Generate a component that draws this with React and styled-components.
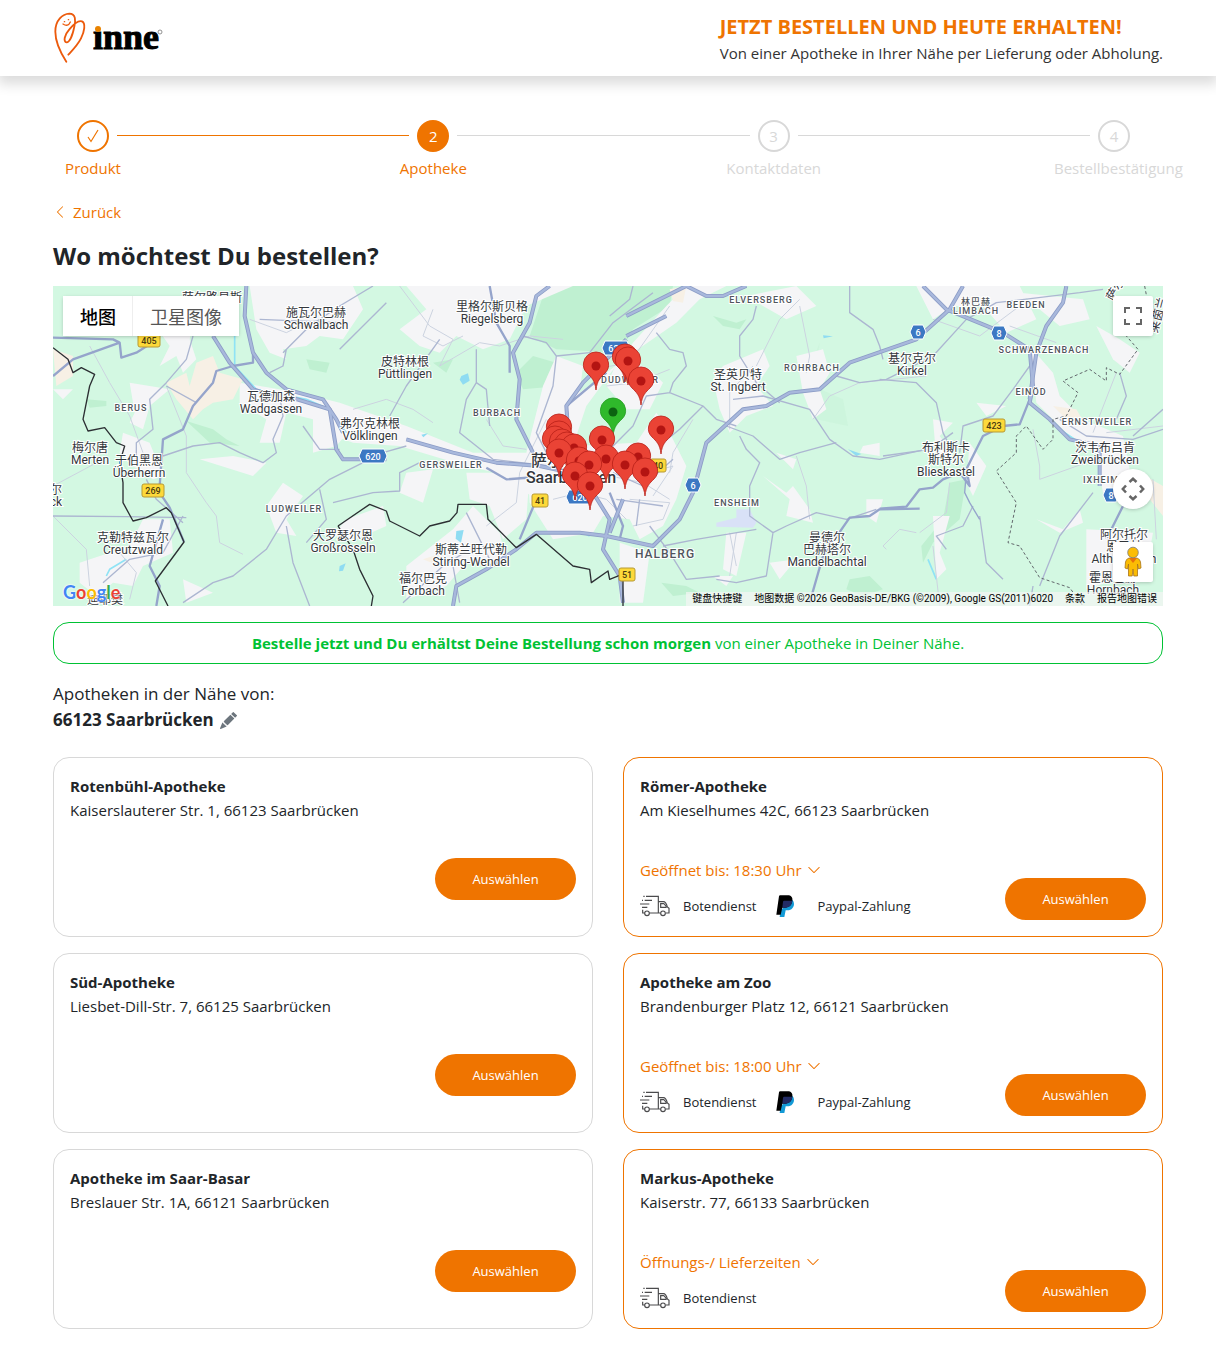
import React, { useState } from "react";
import styled, { createGlobalStyle } from "styled-components";
import { BsChevronDown, BsChevronLeft, BsPencilFill } from "react-icons/bs";

const steps = [
  { label: "Produkt", state: "done" },
  { label: "Apotheke", state: "active" },
  { label: "Kontaktdaten", state: "todo" },
  { label: "Bestellbestätigung", state: "todo" },
];

const pharmacies = [
  { name: "Rotenbühl-Apotheke", address: "Kaiserslauterer Str. 1, 66123 Saarbrücken" },
  {
    name: "Römer-Apotheke",
    address: "Am Kieselhumes 42C, 66123 Saarbrücken",
    hours: "Geöffnet bis: 18:30 Uhr",
    paypal: true,
  },
  { name: "Süd-Apotheke", address: "Liesbet-Dill-Str. 7, 66125 Saarbrücken" },
  {
    name: "Apotheke am Zoo",
    address: "Brandenburger Platz 12, 66121 Saarbrücken",
    hours: "Geöffnet bis: 18:00 Uhr",
    paypal: true,
  },
  { name: "Apotheke im Saar-Basar", address: "Breslauer Str. 1A, 66121 Saarbrücken" },
  {
    name: "Markus-Apotheke",
    address: "Kaiserstr. 77, 66133 Saarbrücken",
    hours: "Öffnungs-/ Lieferzeiten",
  },
];

// x, y of the first line, then the lines
const towns = [
  [159, 12, "萨尔路易斯"],
  [263, 27, "施瓦尔巴赫", "Schwalbach"],
  [439, 21, "里格尔斯贝格", "Riegelsberg"],
  [352, 76, "皮特林根", "Püttlingen"],
  [218, 111, "瓦德加森", "Wadgassen"],
  [317, 138, "弗尔克林根", "Völklingen"],
  [37, 162, "梅尔唐", "Merten"],
  [86, 175, "于伯黑恩", "Überherrn"],
  [3, 204, "尔", "ck"],
  [80, 252, "克勒特兹瓦尔", "Creutzwald"],
  [290, 250, "大罗瑟尔恩", "Großrosseln"],
  [418, 264, "斯蒂兰旺代勒", "Stiring-Wendel"],
  [370, 293, "福尔巴克", "Forbach"],
  [52, 314, "迪耶樊"],
  [685, 89, "圣英贝特", "St. Ingbert"],
  [859, 73, "基尔克尔", "Kirkel"],
  [893, 162, "布利斯卡", "斯特尔", "Blieskastel"],
  [1052, 162, "茨韦布吕肯", "Zweibrücken"],
  [774, 252, "曼德尔", "巴赫塔尔", "Mandelbachtal"],
  [1071, 249, "阿尔托尔", "恩巴赫", "Althornbach"],
  [1060, 292, "霍恩巴赫", "Hornbach"],
];

const districts = [
  [78, 122, "BERUS"],
  [241, 223, "LUDWEILER"],
  [444, 127, "BURBACH"],
  [398, 179, "GERSWEILER"],
  [708, 14, "ELVERSBERG"],
  [759, 82, "ROHRBACH"],
  [577, 94, "DUDWEILER"],
  [684, 217, "ENSHEIM"],
  [923, 16, "林巴赫"],
  [923, 25, "LIMBACH"],
  [973, 19, "BEEDEN"],
  [991, 64, "SCHWARZENBACH"],
  [978, 106, "EINÖD"],
  [1044, 136, "ERNSTWEILER"],
  [1048, 194, "IXHEIM"],
];

const shields = [
  [96, 54, "405"],
  [100, 204, "269"],
  [487, 214, "41"],
  [605, 179, "40"],
  [941, 139, "423"],
  [574, 288, "51"],
  [320, 170, "620", true],
  [527, 211, "620", true],
  [563, 62, "623", true],
  [640, 199, "6", true],
  [865, 46, "6", true],
  [946, 47, "8", true],
  [1058, 209, "8", true],
];

const pins = [
  [572, 72], [543, 80], [575, 75], [588, 95], [506, 142], [506, 149], [502, 154],
  [509, 157], [514, 160], [521, 162], [560, 126, true], [608, 144], [549, 154],
  [506, 167], [526, 175], [553, 173], [585, 171], [536, 179], [572, 179],
  [592, 186], [522, 190], [537, 200],
];

const Logo = () => (
  <LogoLink href="#" aria-label="inne">
    <svg width="34" height="52" viewBox="156 36 102 156" fill="none" stroke="#ec5a0c" strokeWidth="5.500" strokeLinecap="round">
      <path d="M196 185C180 160 163 125 163 95C163 60 185 42 205 41C225 41 224 62 220 80C215 105 206 127 197 127C186 125 190 105 205 88C218 72 232 60 243 64C255 70 250 95 240 115C230 135 215 150 202 164" />
      <path d="M186 72Q201 82 208 66" strokeWidth="4" />
      <path d="M190 65l1 0M202 59l1 0" strokeWidth="4" />
    </svg>
    <svg width="74" height="40" viewBox="0 0 74 40">
      <text x="0" y="31" fontFamily="'Liberation Serif', serif" fontWeight="700" fontSize="36" stroke="#000" strokeWidth="1">inne</text>
      <rect x="0" y="2" width="10" height="11" fill="#fff" />
      <circle cx="5" cy="11" r="3" fill="#e98300" />
      <circle cx="67" cy="14" r="2" fill="none" stroke="#777" strokeWidth="0.8" />
    </svg>
  </LogoLink>
);

const TruckIcon = () => (
  <svg width="30" height="22" viewBox="0 0 90 66" fill="none" stroke="#4b4b4d" strokeWidth="3.5">
    <path d="M18 4H55V54H28M14 54H8V44M55 20H70C78 20 80 28 82 36L87 40V54H78M61 54H56" />
    <path d="M72 26H62V37H80M80 36L72 26M0 27H28M14 16H36M6 37H22M10 4H14M6 16H9" />
    <circle cx="21" cy="55" r="7" />
    <circle cx="69" cy="55" r="7" />
  </svg>
);

const PaypalIcon = () => (
  <svg width="19" height="22" viewBox="0 0 57 66">
    <path fill="#139ad6" d="M48 14C59 22 55 46 34 46H29L25 66H11L14 46z" />
    <path fill="#000" d="M12 1H35C45 1 51 7 49 17C47 32 37 38 25 38H19L14 59H1L9 4Q10 1 12 1z" />
    <path fill="#232c65" d="M24 17H49C48 31 39 38 25 38H19L21 20Q22 17 24 17z" />
  </svg>
);

const MapDrawing = () => (
  <MapSvg viewBox="0 0 1110 320" preserveAspectRatio="xMidYMid slice">
    <rect x="-800" width="2700" height="320" fill="#d3f8e2" />
    {/* terrain and roads are plotted at three times the map scale */}
    <g transform="scale(0.333333)" strokeLinejoin="round" fill="none">
      <g fill="#bff0d1">
        <path d="M1480 0L1860 0 1850 60 1740 130 1700 200 1510 190 1430 150z" />
        <path d="M1440 210L1510 230 1520 300 1410 310 1390 260z" />
        <path d="M760 220L830 230 820 260 770 250zM400 405L480 430 520 460 560 480 470 470zM100 340l60 5 0 15-50 5zM1140 230l60-10-20 40z" />
        <path d="M2300 170L2290 250 2280 300 2370 340 2385 420 2290 400 2250 300z" opacity="0.3" />
        <path d="M2690 590L2740 580 2720 700 2640 770 2610 830 2605 780 2670 700z" />
        <path d="M1825 890L1900 900 1940 920 1860 930zM2390 880l60-10 40 40-60 20-50-20zM1980 90l70 20 30-10-20 30-50-10z" />
      </g>
      <g fill="#f5f5f7">
        <path d="M590 0L900 0 930 70 870 160 800 150 760 180 690 190 700 220 650 200 610 130z" />
        <path d="M1060 0L1560 0 1420 60 1370 160 1290 190 1210 150 1160 200 1100 180 1040 130 1120 70z" />
        <path d="M280 80L420 110 410 160 430 220 390 260 370 210 320 240 350 180z" />
        <path d="M560 290L740 320 860 350 900 420 850 480 780 500 780 400 700 380 680 470 620 470 640 400 560 350z" />
        <path d="M230 290L350 310 290 360 270 430 230 410 245 380zM210 440L290 470 330 570 300 580 240 540 200 500z" />
        <path d="M440 520L540 510 640 530 600 570zM690 590L750 630 700 700 730 750 670 740 640 660z" />
        <path d="M80 830L230 780 270 700 350 700 360 800 270 840 240 900 180 890 130 930 80 890zM390 880L480 920 400 950z" />
        <path d="M0 310L60 310 30 340zM860 350L1060 420 1260 500 1420 500 1500 600 1450 640 1330 560 1240 540 1040 480 900 470 820 440 790 390z" />
        <path d="M1060 560L1140 550 1110 650 1040 620zM1240 560L1430 560 1420 700 1350 760 1310 660 1250 640z" />
        <path d="M1420 500L1470 300 1510 210 1590 240 1580 320 1740 200 1870 110 1940 40 2020 0 1900 0 1840 60 1740 170 1600 360 1560 480 1750 470 1810 380 1850 440 1900 540 1870 640 1830 720 1760 760 1730 700 1650 690 1620 740 1500 760 1430 650z" />
        <path d="M1700 210L1790 250 1830 290 1790 370 1720 370 1660 300zM880 700L990 660 1000 720 910 760 840 750z" />
        <path d="M1060 840L1200 730 1260 660 1340 740 1360 830 1240 830 1180 900 1060 940z" />
        <path d="M1700 770L1790 800 1770 950 1700 950z" />
        <path d="M2010 240L2130 190 2150 240 2110 300 2160 360 2080 390 2030 440 2000 370 1980 280z" />
        <path d="M2080 30L2230 0 2290 60 2200 100 2130 60zM2230 210L2310 190 2330 260 2300 310 2320 370 2280 400 2250 320z" />
        <path d="M2130 570L2200 620 2220 600 2270 670 2280 710 2200 690 2210 640zM2170 500L2230 520 2220 550zM2430 480L2480 470 2480 510 2420 500z" />
        <path d="M2440 640L2490 640 2470 710 2440 690zM2020 740L2080 740 2050 870 2010 850zM2150 830L2230 820 2180 880zM1980 870l60 0-20 30z" />
        <path d="M2590 0L2900 0 2950 100 2860 140 2790 60 2700 60 2640 100zM2900 20L3090 40 3110 100 3020 120z" />
        <path d="M2930 180L3000 260 3020 330 3090 400 3210 450 3240 600 3150 620 3130 500 3040 440 2950 350z" />
        <path d="M2640 400L2700 410 2660 450 2690 490 2650 520zM2750 470L2800 540 2760 630 2740 590zM2770 350L2860 360 2800 390z" />
        <path d="M2640 690L2690 690 2660 800 2680 850 2650 880zM2950 700L3030 730 3080 670 3090 710 3020 740zM3100 730L3300 740 3280 850 3100 910z" />
        <path d="M3130 120L3200 160 3260 200 3230 260 3180 220z" />
      </g>
      <g fill="#f7f0e5">
        <path d="M340 290L400 260 410 300 430 230 480 210 500 260 570 280 540 340 480 350 450 370 420 400 370 340z" />
        <path d="M0 190L60 210 60 270 10 300z" />
        <path d="M3000 360L3070 370 3100 420 3040 400zM3260 560L3330 600 3330 690 3290 640zM1850 10l50-10-10 50-30-5zM1110 820l60-20-10 40z" />
      </g>
      <g fill="#8fdcf2">
        <path d="M1225 270l20-8 5 22-20 12-10-15zM1210 735l22-3-8 38-16-12zM860 840l18-8-8 22-12 2zM2310 148l30 3-28 6zM2385 490l40 14-15 6zM1105 446l20-4-14 12z" />
      </g>
      <path d="M1990 710L2050 695 2050 670 2090 670 2110 710 2100 725 1990 722z" fill="#d9e1f7" />
      <g stroke="#8fe3f5" strokeWidth="5">
        <path d="M545 150V240L610 310 760 340 830 370 880 440" />
        <path d="M160 870l10-20 50-30M2625 820L2650 880M3020 430l60 40M1590 740l20 10" />
      </g>

      {/* lanes */}
      <g stroke="#ccd3e0" strokeWidth="3">
        <path d="M110 180L170 290 230 390 270 500M340 300L400 450 400 560 460 650 490 690 500 770 570 805" />
        <path d="M0 600L150 520M0 690L100 790 110 900M200 800L250 860 230 940M590 100L700 140 760 110 860 90" />
        <path d="M1040 0L1130 120 1200 160 1160 240 1280 170 1340 180 1430 150 1530 160" />
        <path d="M1140 70L1110 150 1170 180 1230 150M900 370L1000 340 1080 370 1140 410M1300 400L1350 480 1420 490" />
        <path d="M1480 400L1400 560 1390 650 1300 720M1560 480L1620 560 1770 590 1850 640M1660 300L1750 290 1850 250M1620 250L1730 230 1850 60" />
        <path d="M1500 640L1580 620 1660 640 1720 700M1730 640L1850 650 1830 700 1740 720M1790 560L1860 540 1800 630" />
        <path d="M1920 400L1860 500 1850 560M2030 430L2030 320 2100 240M2110 240L2180 100 2240 40M2240 60L2270 210 2260 260" />
        <path d="M2280 400L2330 330 2420 290 2620 270M2230 510L2260 600 2270 700M2050 740L2030 870M2030 740l20 100" />
        <path d="M2590 740L2540 730 2490 780 2500 790M2690 590L2680 680 2600 740M2640 780L2660 960M2940 430L2960 540 2960 580M2960 580L3100 530" />
        <path d="M2640 100L2780 150 2900 60M2870 120L3010 170M3160 440L3330 420M3190 260L3120 440M3300 580L3310 760" />
      </g>
      <g stroke="#acb6d1" strokeWidth="4">
        <path d="M0 690L220 692 400 695M280 580L310 640 390 710M390 690L330 800 230 820 150 890" />
        <path d="M420 150L400 220 340 290 290 340 300 430 250 470 250 540M340 300L430 350M330 510L420 480 500 470 560 500 630 530 670 500 660 460 690 390 680 330" />
        <path d="M750 420L800 490 860 490M700 190L690 240 650 260M690 200L770 120 860 60 960 0M860 190L1000 50" />
        <path d="M390 950L480 890 540 870 640 790 700 690 830 580 990 500 1060 480M700 720L720 830 770 960M800 610L820 700 760 770" />
        <path d="M620 100L860 110M1160 160L1060 300 1010 390M1270 190L1270 290 1240 340 1220 440 1320 520 1490 540M1270 290L1300 310 1310 420" />
        <path d="M840 650L960 620 1040 615 1040 560 1100 530M1410 150L1480 170 1510 210 1500 300 1450 440 1480 500" />
        <path d="M1510 210L1610 200 1680 110 1800 20M1240 680L1310 820M1050 950L1170 840 1250 790M1200 840l20 110" />
        <path d="M1670 90L1730 40 1740 0M1810 140L1850 190 1890 200 1900 240 1860 290 1850 320 1950 360 1990 400 2050 420M1850 320L1780 330 1740 420 1660 500" />
        <path d="M1950 360L1880 430 1830 470M1680 560L1770 600 1860 520M1690 640L1830 660M1760 640L1750 720M2110 60L2100 100 2060 150 2060 210 2110 290 2180 350" />
        <path d="M2040 340L2130 330 2270 370 2330 460 2400 510 2480 520 2620 490M2020 420L2100 450 2180 520 2240 500 2350 470" />
        <path d="M2060 450L2080 490 2120 530 2090 600 2090 690 2160 740 2200 720 2290 680 2380 700 2470 670M2160 740L2140 870 2050 890 1990 880" />
        <path d="M1830 780L1930 760 2110 730M1790 720L1850 800 1900 880 2000 870M2390 0L2390 80 2460 130 2480 180 2490 220" />
        <path d="M2350 270L2420 290 2500 280 2640 210 2740 100 2830 50 3080 20 3150 10" />
        <path d="M2480 280L2590 290 2650 350 2670 440 2700 500M2720 500L2730 420 2820 390 2880 310 2930 240M2490 510L2630 490 2700 440" />
        <path d="M2680 790L2650 750 2730 720 2760 660M2780 690L2800 830 2850 880M2960 900L3020 750 3120 620M2940 900L2930 960" />
        <path d="M3020 400L3100 450 3240 460 3330 430M3200 260L3220 330 3190 400M3240 450L3330 370" />
      </g>
      <g stroke="#95a4cb" strokeWidth="7">
        <path d="M0 270L60 220 200 170 205 215 250 200 290 175M0 155L180 160 200 170" />
        <path d="M310 960L320 900 290 840 310 770 330 700M320 600L330 460 390 430 420 360 480 290 490 255 540 240 600 230 600 200" />
        <path d="M1310 0L1330 110 1370 180 1370 260M1660 260L1540 360 1550 450M1300 545L1360 580 1490 570" />
        <path d="M1450 640L1400 760M1670 620L1710 720 1700 760M2270 950L2310 810 2390 695 2450 690 2480 670 2600 668" />
        <path d="M2480 668L2560 662 2600 610 2640 605 2670 580 2720 560 2750 600 2740 550 2790 450 2850 420 2900 415 2930 340M3160 760L3220 640" />
        <path d="M2740 560L2735 620 2750 650 2780 700" strokeWidth="4" />
        <path d="M320 620L350 665 393 768" />
      </g>

      {/* motorways: a casing with a lighter core */}
      {[["#8c9cc6", 12], ["#a8b8dc", 7]].map(([stroke, strokeWidth]) => (
        <g key={stroke} stroke={stroke} strokeWidth={strokeWidth}>
          <path d="M480 150L530 230 600 310 660 330M580 0L575 90 600 200 640 260 700 310 810 340 850 400 870 440" />
          <path d="M700 330L830 370 850 490 870 520 1000 520M1060 460L1200 500 1330 530 1460 540 1600 570" />
          <path d="M1490 0L1450 30 1430 110 1380 200 1400 280 1390 400 1440 500" />
          <path d="M1720 90L1780 60 1900 0 1960 30 2010 30 2080 0M1720 150L1780 120 1840 90" />
          <path d="M1720 160L1590 290 1540 360 1545 430M1200 960L1210 900 1300 850 1390 790 1450 740 1580 740 1660 750 1800 780 1880 700 1920 620 1960 470 2070 370 2140 360 2210 320 2300 310 2390 230 2590 160 2690 70 2730 0" />
          <path d="M2610 0L2680 70 2850 140 2930 190 2940 300 2930 350 2990 400 3050 460 3140 480 3140 600" />
          <path d="M3040 0L3030 50 2980 120 2950 200 2930 340M1620 620L1670 700 1650 790 1700 870 1710 950M1670 740L1710 640" />
        </g>
      ))}
      <g stroke="#2c2f33" strokeWidth="4">
        <path d="M0 185L45 220 60 260 85 245 125 265 110 300 90 400 105 435 155 425 190 470 215 480 200 530 210 590 210 650 240 705 280 695 340 665 355 680 393 768 307 885 345 960" />
        <path d="M855 720L950 655 1000 675 1010 705 1100 750 1130 720 1190 705 1212 680 1215 655 1300 655 1305 700 1390 785 1450 745 1560 840 1610 850 1615 890 1665 855 1670 880 1720 860M1710 880L1710 960" />
        <path d="M855 720L900 790 920 850 960 930 955 960" />
      </g>
      <g stroke="#61666b" strokeWidth="3" strokeDasharray="9 7">
        <path d="M3275 0L3290 80 3220 150 3255 190 3200 265 3160 245 3160 285 3110 250 3030 285 3075 320 3040 390 3000 400 3000 460 2970 490 2920 420 2890 450 2890 500 2830 555 2890 650 2865 770 2900 780 2960 875 3050 905 3090 960" />
      </g>
    </g>

    {towns.map(([x, y, ...lines]) => (
      <TownLabel key={lines[0]}>
        {lines.map((line, i) => (
          <tspan key={line} x={x} y={y + 4 + i * 12}>{line}</tspan>
        ))}
      </TownLabel>
    ))}
    {districts.map(([x, y, name]) => (
      <DistrictLabel key={name} x={x} y={y + 3}>{name}</DistrictLabel>
    ))}
    <DistrictLabel x="612" y="272" $large>HALBERG</DistrictLabel>
    <TownLabel x="518" y="180" $city>萨尔布吕肯</TownLabel>
    <TownLabel x="518" y="197" $city>Saarbrücken</TownLabel>
    <TownLabel x="0" y="0" transform="translate(1109 30) rotate(-75)">莱茵兰</TownLabel>
    <TownLabel x="0" y="0" transform="translate(1066 5) rotate(-60)">萨尔</TownLabel>
    {shields.map(([x, y, number, motorway], i) => {
      const half = number.length * 3 + (motorway ? 3 : 2);
      return (
        <g key={i}>
          {motorway ? (
            <path
              d={`M${x - half + 1} ${y - 7}H${x + half - 1}L${x + half + 2} ${y}L${x + half - 1} ${y + 7}H${x - half + 1}L${x - half - 2} ${y}z`}
              fill="#3c78c3" stroke="#fff" strokeWidth="1"
            />
          ) : (
            <rect x={x - half} y={y - 6} width={half * 2} height="13" rx="2" fill="#fdd93a" stroke="#b79a35" strokeWidth="1" />
          )}
          <ShieldText x={x} y={y + 4} $light={motorway}>{number}</ShieldText>
        </g>
      );
    })}
    {pins.map(([x, y, own], i) => (
      <g key={i} transform={`translate(${x} ${y})`}>
        <path
          d="M0 24C-1 14-5 11-9 7C-12 4-13 1-12.5-3A12.6 12.6 0 0 1 12.5-3C13 1 12 4 9 7C5 11 1 14 0 24z"
          fill={own ? "#2fb92b" : "#ea4335"} stroke={own ? "#229a20" : "#b81f18"} strokeWidth="0.8"
        />
        <circle r="4.5" fill={own ? "#0c6311" : "#b31412"} />
      </g>
    ))}
  </MapSvg>
);

const PharmacyMap = () => {
  const [view, setView] = useState("map");

  return (
    <MapFrame aria-label="Karte">
      <MapDrawing />
      <ViewSwitch>
        <ViewButton $active={view === "map"} onClick={() => setView("map")}>地图</ViewButton>
        <ViewButton $active={view === "satellite"} onClick={() => setView("satellite")}>卫星图像</ViewButton>
      </ViewSwitch>
      <MapTools>
        <MapButton aria-label="Vollbild">
          <svg width="18" height="18" viewBox="0 0 18 18" fill="none" stroke="#666" strokeWidth="2">
            <path d="M1 6V1H6M12 1H17V6M17 12V17H12M6 17H1V12" />
          </svg>
        </MapButton>
        <ToolGroup>
          <MapButton $round aria-label="Kamerasteuerung">
            <svg width="24" height="24" viewBox="0 0 24 24" fill="none" stroke="#666" strokeWidth="2.5">
              <path d="M8.500 5L12 1.800L15.500 5M8.500 19L12 22.200L15.500 19M5 8.500L1.800 12L5 15.500M19 8.500L22.200 12L19 15.500" />
            </svg>
          </MapButton>
          <MapButton aria-label="Street View">
            <svg width="18" height="32" viewBox="0 0 18 32">
              <path d="M5 12H13Q16 13 16.500 16L17 22L14.500 23L13.500 18V30H9.800L9 23L8.200 30H4.500V18L3.500 23L1 22L1.500 16Q2 13 5 12z" fill="#fbbc04" stroke="#a8751a" strokeWidth="0.8" />
              <path d="M5 12H13L9 17z" fill="#e8710a" />
              <circle cx="9" cy="6.500" r="5.300" fill="#fbbc04" stroke="#777" strokeWidth="0.8" />
            </svg>
          </MapButton>
        </ToolGroup>
      </MapTools>
      <GoogleMark href="#" aria-label="Google">
        <Letter $color="#4285f4">G</Letter>
        <Letter $color="#ea4335">o</Letter>
        <Letter $color="#fbbc04">o</Letter>
        <Letter $color="#4285f4">g</Letter>
        <Letter $color="#34a853">l</Letter>
        <Letter $color="#ea4335">e</Letter>
      </GoogleMark>
      <Attribution>
        <a href="#">键盘快捷键</a>
        <span>地图数据 ©2026 GeoBasis-DE/BKG (©2009), Google GS(2011)6020</span>
        <a href="#">条款</a>
        <a href="#">报告地图错误</a>
      </Attribution>
    </MapFrame>
  );
};

const PharmacyCard = ({ name, address, hours, paypal }) => (
  <Card $open={Boolean(hours)}>
    <CardTitle>{name}</CardTitle>
    <Address>{address}</Address>
    <CardFooter $raised={!hours}>
      {hours && (
        <Details>
          <HoursButton>
            {hours} <BsChevronDown size={14} />
          </HoursButton>
          <Services>
            <Service><TruckIcon />Botendienst</Service>
            {paypal && <Service $wide><PaypalIcon />Paypal-Zahlung</Service>}
          </Services>
        </Details>
      )}
      <SelectButton>Auswählen</SelectButton>
    </CardFooter>
  </Card>
);

const App = () => {
  return (
    <>
      <GlobalStyle />
      <Header>
        <HeaderInner>
          <Logo />
          <Claim>
            <ClaimTitle>JETZT BESTELLEN UND HEUTE ERHALTEN!</ClaimTitle>
            <ClaimText>Von einer Apotheke in Ihrer Nähe per Lieferung oder Abholung.</ClaimText>
          </Claim>
        </HeaderInner>
      </Header>

      <Main>
        <Stepper>
          {steps.map((step, i) => (
            <React.Fragment key={step.label}>
              {i > 0 && <StepLine $done={steps[i - 1].state === "done"} />}
              <Step $state={step.state}>
                <StepCircle $state={step.state}>
                  {step.state === "done" ? (
                    <svg width="12" height="14" viewBox="0 0 12 14" fill="none" stroke="#ef7400" strokeWidth="1.2">
                      <path d="M1 8L4 12.500L11 1" />
                    </svg>
                  ) : (
                    i + 1
                  )}
                </StepCircle>
                {step.label}
              </Step>
            </React.Fragment>
          ))}
        </Stepper>

        <BackLink href="#"><BsChevronLeft size={14} />Zurück</BackLink>
        <Title>Wo möchtest Du bestellen?</Title>
        <PharmacyMap />
        <Notice>
          <strong>Bestelle jetzt und Du erhältst Deine Bestellung schon morgen</strong> von einer Apotheke in Deiner Nähe.
        </Notice>
        <Place>
          <div>Apotheken in der Nähe von:</div>
          <PlaceName>
            66123 Saarbrücken
            <EditButton aria-label="Ort ändern"><BsPencilFill size={17} /></EditButton>
          </PlaceName>
        </Place>
        <Cards>
          {pharmacies.map((pharmacy) => (
            <PharmacyCard key={pharmacy.name} {...pharmacy} />
          ))}
        </Cards>
      </Main>
    </>
  );
};

//  CSS STYLING

const GlobalStyle = createGlobalStyle`
  * {
    box-sizing: border-box;
  }

  body {
    margin: 0;
    background-color: #fff;
    color: #212529;
    font-family: "Open Sans", "Noto Sans", sans-serif;
    font-size: 15px;
    line-height: 24px;
  }

  button {
    font-family: inherit;
    cursor: pointer;
  }
`;

const Header = styled.header`
  background-color: #fff;
  box-shadow: 0 6px 12px 2px rgba(0, 0, 0, 0.14);
`;

const HeaderInner = styled.div`
  display: flex;
  align-items: center;
  justify-content: space-between;
  max-width: 1140px;
  min-height: 76px;
  margin: 0 auto;
  padding: 0 15px;
`;

const LogoLink = styled.a`
  display: flex;
  align-items: center;
  gap: 6px;
`;

const Claim = styled.div`
  padding-top: 2px;
`;

const ClaimTitle = styled.div`
  color: #ef7400;
  font-size: 20px;
  font-weight: 700;
  line-height: 28px;
`;

const ClaimText = styled.div`
  color: #333;
`;

const Main = styled.main`
  max-width: 1140px;
  margin: 0 auto;
  padding: 44px 15px 22px;
`;

const Stepper = styled.ol`
  display: flex;
  list-style: none;
  margin: 0 -11px 0 -20px;
  padding: 0;
`;

const Step = styled.li`
  display: flex;
  flex-direction: column;
  align-items: safe center;
  gap: 4px;
  flex: 0 0 120px;
  min-width: 0;
  white-space: nowrap;
  color: ${({ $state }) => ($state === "todo" ? "#d8d8d8" : "#ef7400")};
`;

const StepCircle = styled.span`
  display: flex;
  align-items: center;
  justify-content: center;
  align-self: center;
  width: 32px;
  height: 32px;
  border: 2px solid currentColor;
  border-radius: 50%;
  background-color: ${({ $state }) => ($state === "active" ? "#ef7400" : "#fff")};
  border-color: ${({ $state }) => ($state === "todo" ? "#d8d8d8" : "#ef7400")};
  color: ${({ $state }) => ($state === "active" ? "#fff" : "#d8d8d8")};
`;

const StepLine = styled.li`
  flex: 1;
  height: 1px;
  margin: 15px -36px 0;
  background-color: ${({ $done }) => ($done ? "#ef7400" : "#d8d8d8")};
`;

const BackLink = styled.a`
  display: flex;
  align-items: center;
  gap: 6px;
  width: fit-content;
  margin-top: 20px;
  color: #ef7400;
  text-decoration: none;
`;

const Title = styled.h1`
  margin: 16px 0 14px;
  font-size: 24px;
  font-weight: 700;
  line-height: 32px;
`;

const MapFrame = styled.section`
  position: relative;
  height: 320px;
  overflow: hidden;
  background-color: #d3f8e2;
  font-family: Roboto, "Noto Sans CJK SC", sans-serif;
`;

const MapSvg = styled.svg`
  display: block;
  width: 100%;
  height: 100%;
`;

const TownLabel = styled.text`
  fill: #33373c;
  stroke: #fff;
  stroke-width: 2px;
  paint-order: stroke;
  text-anchor: middle;
  font-size: ${({ $city }) => ($city ? "16px" : "12px")};
  font-weight: ${({ $city }) => ($city ? 500 : 400)};
`;

const DistrictLabel = styled.text`
  fill: #4f555c;
  stroke: #fff;
  stroke-width: 2px;
  paint-order: stroke;
  text-anchor: middle;
  font-size: ${({ $large }) => ($large ? "12px" : "9px")};
  font-weight: 500;
  letter-spacing: 1px;
`;

const ShieldText = styled.text`
  fill: ${({ $light }) => ($light ? "#fff" : "#4a3d10")};
  text-anchor: middle;
  font-size: 9px;
  font-weight: 500;
`;

const ViewSwitch = styled.div`
  position: absolute;
  top: 10px;
  left: 10px;
  display: flex;
  box-shadow: 0 1px 4px -1px rgba(0, 0, 0, 0.3);
`;

const ViewButton = styled.button`
  height: 40px;
  padding: 0 17px;
  border: none;
  background-color: #fff;
  box-shadow: inset -1px 0 #eee;
  color: ${({ $active }) => ($active ? "#000" : "#565656")};
  font-size: 18px;
  font-weight: ${({ $active }) => ($active ? 500 : 400)};

  &:last-child {
    box-shadow: none;
  }
`;

const MapTools = styled.div`
  position: absolute;
  top: 10px;
  right: 10px;
  bottom: 24px;
  display: flex;
  flex-direction: column;
  justify-content: space-between;
`;

const ToolGroup = styled.div`
  display: flex;
  flex-direction: column;
  gap: 33px;
`;

const MapButton = styled.button`
  display: flex;
  align-items: center;
  justify-content: center;
  width: 40px;
  height: 40px;
  padding: 0;
  border: none;
  border-radius: ${({ $round }) => ($round ? "50%" : "2px")};
  background-color: #fff;
  box-shadow: 0 1px 4px -1px rgba(0, 0, 0, 0.3);
`;

const GoogleMark = styled.a`
  position: absolute;
  left: 10px;
  bottom: 0;
  display: flex;
  font-family: Lato, sans-serif;
  font-size: 18px;
  font-weight: 700;
  line-height: 28px;
  text-decoration: none;
  text-shadow: 0 0 2px #fff, 0 0 2px #fff;
`;

const Letter = styled.span`
  color: ${({ $color }) => $color};
`;

const Attribution = styled.div`
  position: absolute;
  right: 0;
  bottom: 0;
  display: flex;
  gap: 12px;
  padding: 0 6px;
  background-color: rgba(245, 245, 245, 0.7);
  color: #000;
  font-size: 10px;
  line-height: 14px;
  white-space: nowrap;

  a {
    color: inherit;
    text-decoration: none;
  }
`;

const Notice = styled.p`
  margin: 16px 0;
  padding: 8px 16px;
  border: 1px solid #00c234;
  border-radius: 16px;
  color: #00c234;
  text-align: center;
`;

const Place = styled.div`
  margin: 17px 0 24px;
  font-size: 17px;
  line-height: 26px;
`;

const PlaceName = styled.div`
  display: flex;
  align-items: center;
  gap: 6px;
  font-weight: 700;
`;

const EditButton = styled.button`
  display: flex;
  padding: 0;
  border: none;
  background: none;
  color: #6c757d;
`;

const Cards = styled.div`
  display: grid;
  grid-template-columns: 1fr 1fr;
  gap: 16px 30px;

  @media only screen and (max-width: 800px) {
    grid-template-columns: 1fr;
  }
`;

const Card = styled.article`
  display: flex;
  flex-direction: column;
  min-height: 180px;
  padding: 16px;
  border: 1px solid ${({ $open }) => ($open ? "#ef7400" : "#d8d8d8")};
  border-radius: 16px;
`;

const CardTitle = styled.h2`
  margin: 0;
  font-size: 15px;
  font-weight: 700;
  line-height: 24px;
`;

const Address = styled.div`
  line-height: 24px;
`;

const CardFooter = styled.div`
  display: flex;
  align-items: flex-end;
  margin-top: auto;
  padding-bottom: ${({ $raised }) => ($raised ? "20px" : "0")};
`;

const Details = styled.div`
  display: flex;
  flex-direction: column;
  gap: 10px;
`;

const HoursButton = styled.button`
  display: flex;
  align-items: center;
  gap: 5px;
  padding: 0;
  border: none;
  background: none;
  color: #ef7400;
  font-size: 15px;
  line-height: 24px;
`;

const Services = styled.div`
  display: flex;
  align-items: center;
  gap: 20px;
  font-size: 13px;
  line-height: 28px;
`;

const Service = styled.span`
  display: flex;
  align-items: center;
  gap: ${({ $wide }) => ($wide ? "22px" : "13px")};
`;

const SelectButton = styled.button`
  width: 141px;
  height: 42px;
  margin-left: auto;
  border: none;
  border-radius: 21px;
  background-color: #ef7400;
  color: #fff;
  font-size: 13px;

  &:hover {
    background-color: #d96900;
  }
`;

export default App;
